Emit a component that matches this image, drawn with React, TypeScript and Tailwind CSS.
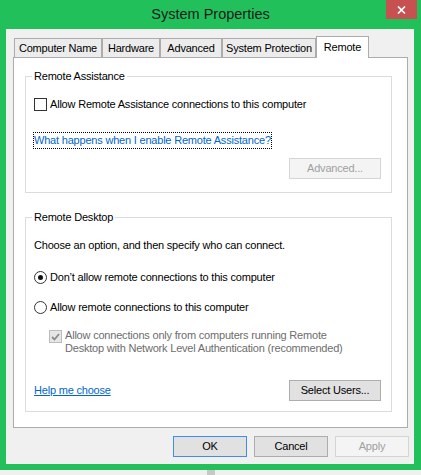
import type { ReactNode } from 'react'

const font = { fontFamily: '"Liberation Sans", Arial, sans-serif' }

function Btn({ children, disabled, primary, w = 'w-[92px]' }: { children: ReactNode; disabled?: boolean; primary?: boolean; w?: string }) {
  const tone = disabled
    ? 'bg-[#f4f4f4] border-[#d5d5d5] text-[#a0a0a0]'
    : primary
      ? 'bg-[#e1e1e1] border-[#3c8ff0] text-black'
      : 'bg-[#e1e1e1] border-[#adadad] text-black'
  return (
    <div className={`${w} h-[21px] border flex items-center justify-center text-[11px] tracking-[-0.2px] ${tone}`}>
      {children}
    </div>
  )
}

function Check({ checked, disabled }: { checked?: boolean; disabled?: boolean }) {
  return (
    <div className={`w-[13px] h-[13px] border flex items-center justify-center shrink-0 ${disabled ? 'border-[#bcbcbc] bg-[#e6e6e6]' : 'border-[#333] bg-white'}`}>
      {checked && (
        <svg width="9" height="8" viewBox="0 0 9 8">
          <path d="M1 4 L3.5 6.5 L8 1" fill="none" stroke={disabled ? '#8a8a8a' : '#222'} strokeWidth="1.8" />
        </svg>
      )}
    </div>
  )
}

function Radio({ on }: { on?: boolean }) {
  return (
    <div className="w-[13px] h-[13px] rounded-full border border-[#333] bg-white flex items-center justify-center shrink-0">
      {on && <div className="w-[5px] h-[5px] rounded-full bg-[#111]" />}
    </div>
  )
}

function Group({ title, mt, children }: { title: string; mt: string; children: ReactNode }) {
  return (
    <fieldset className={`w-[367px] border border-[#dcdcdc] p-0 m-0 ${mt}`}>
      <legend className="ml-[6px] px-[2px] leading-[15px] text-[11px] tracking-[-0.2px] text-black">{title}</legend>
      {children}
    </fieldset>
  )
}

const tabs = [
  { label: 'Computer Name', w: 'w-[88px]' },
  { label: 'Hardware', w: 'w-[58px]' },
  { label: 'Advanced', w: 'w-[62px]' },
  { label: 'System Protection', w: 'w-[94px]' },
]

export default function App() {
  return (
    <div className="w-[421px] h-[475px] flex flex-col bg-[#f0f0f0] overflow-hidden" style={font}>
      <div className="h-[470px] bg-[#21c05b] flex flex-col">
        {/* title bar */}
        <div className="h-[29px] grid grid-cols-[35px_1fr_35px] shrink-0">
          <div />
          <div className="text-center leading-[28px] text-[14.5px] text-[#1c1c1c]">System Properties</div>
          <div className="w-[31px] h-[19px] bg-[#c75050] flex items-center justify-center">
            <svg width="9" height="8" viewBox="0 0 9 8">
              <path d="M1 0.5 L8 7.5 M8 0.5 L1 7.5" stroke="#fff" strokeWidth="1.7" />
            </svg>
          </div>
        </div>

        {/* client area */}
        <div className="ml-[6px] mr-[7px] h-[435px] bg-[#f0f0f0] flex flex-col text-[11px] tracking-[-0.2px] text-black">
          <div className="mt-[7px] ml-[8px] h-[21px] flex items-end">
            {tabs.map(t => (
              <div key={t.label} className={`${t.w} h-[19px] border-t border-l border-r border-[#acacac] bg-[#ececec] flex items-center justify-center`}>
                {t.label}
              </div>
            ))}
            <div className="relative z-10 w-[53px] h-[22px] -mb-px border-t border-l border-r border-[#acacac] bg-white flex items-start justify-center pt-[2px]">
              Remote
            </div>
          </div>

          <div className="ml-[7px] w-[395px] h-[371px] border border-[#acacac] bg-white pl-[11px] pt-px">
            <Group title="Remote Assistance" mt="mt-[10px]">
              <div className="pl-[8px] pr-[10px] pb-[13px]">
                <div className="mt-[13px] h-[15px] flex items-center">
                  <Check />
                  <span className="ml-[3px]">Allow Remote Assistance connections to this computer</span>
                </div>
                <div className="mt-[21px] h-[15px] flex">
                  <span className="text-[#0066cc] outline outline-1 outline-dotted outline-black leading-[14px]">
                    What happens when I enable Remote Assistance?
                  </span>
                </div>
                <div className="mt-[10px] flex justify-end">
                  <Btn disabled>Advanced...</Btn>
                </div>
              </div>
            </Group>

            <Group title="Remote Desktop" mt="mt-[17px]">
              <div className="pl-[8px] pr-[10px] pb-[10px]">
                <div className="mt-[13px] leading-[15px]">Choose an option, and then specify who can connect.</div>
                <div className="mt-[17px] h-[15px] flex items-center">
                  <Radio on />
                  <span className="ml-[3px]">Don’t allow remote connections to this computer</span>
                </div>
                <div className="mt-[15px] h-[15px] flex items-center">
                  <Radio />
                  <span className="ml-[3px]">Allow remote connections to this computer</span>
                </div>
                <div className="mt-[14px] ml-[15px] flex items-start">
                  <div className="mt-px">
                    <Check checked disabled />
                  </div>
                  <span className="ml-[3px] leading-[13px] text-[#6d6d6d]">
                    Allow connections only from computers running Remote<br />
                    Desktop with Network Level Authentication (recommended)
                  </span>
                </div>
                <div className="mt-[25px] flex items-center justify-between">
                  <span className="text-[#0066cc] underline">Help me choose</span>
                  <Btn>Select Users...</Btn>
                </div>
              </div>
            </Group>
          </div>

          <div className="mt-[8px] pr-[5px] flex justify-end gap-[7px]">
            <Btn primary w="w-[74px]">OK</Btn>
            <Btn w="w-[74px]">Cancel</Btn>
            <Btn disabled w="w-[74px]">Apply</Btn>
          </div>
        </div>
      </div>
      <div className="h-[5px] flex">
        <div className="ml-[207px] w-[8px] h-full bg-[#c8c8c8]" />
      </div>
    </div>
  )
}
